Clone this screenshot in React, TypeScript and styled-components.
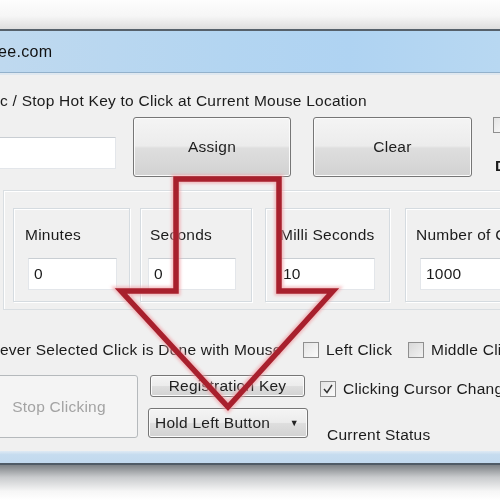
import styled, { createGlobalStyle } from "styled-components";

const GlobalStyle = createGlobalStyle`
  html, body {
    margin: 0;
    padding: 0;
    background: #fff;
  }
  body {
    font-family: "Liberation Sans", Arial, sans-serif;
  }
`;

const Page = styled.div`
  position: relative;
  width: 500px;
  height: 500px;
  overflow: hidden;
  background: #fff;
  display: flex;
  flex-direction: column;
  filter: blur(0.45px);
`;

const TopGap = styled.div`
  height: 29px;
  flex-shrink: 0;
  background: linear-gradient(#fdfdfd, #f6f6f6 55%, #dedede);
`;

const Window = styled.div`
  display: flex;
  flex-direction: column;
  border-top: 2px solid #56616b;
`;

const TitleBar = styled.div`
  height: 41px;
  display: flex;
  align-items: center;
  background: linear-gradient(90deg, #bfd9ef, #b3d5f1 45%, #afd3f2 70%, #b8d8f2);
  border-bottom: 1px solid #93b1cb;
  font-size: 16px;
  color: #111;
`;

const TitleText = styled.span`
  margin-left: -2px;
  margin-top: 1px;
  letter-spacing: 0.3px;
`;

const Body = styled.div`
  height: 378px;
  background: #f0f0f0;
  border-top: 2px solid #dfe8f0;
  padding-top: 17px;
  box-sizing: border-box;
  font-size: 15.5px;
  letter-spacing: 0.25px;
  color: #1b1b1b;
  display: flex;
  flex-direction: column;
`;

const Label = styled.div`
  height: 18px;
  line-height: 18px;
  white-space: nowrap;
`;

const Row = styled.div<{ $top: number; $height: number }>`
  display: flex;
  flex-shrink: 0;
  margin-top: ${(p) => p.$top}px;
  height: ${(p) => p.$height}px;
  white-space: nowrap;
`;

const TextBox = styled.div<{ $width: number; $left?: number; $top?: number }>`
  flex-shrink: 0;
  width: ${(p) => p.$width}px;
  height: 32px;
  margin-left: ${(p) => p.$left ?? 0}px;
  margin-top: ${(p) => p.$top ?? 0}px;
  box-sizing: border-box;
  background: #fff;
  border: 1px solid #e3e6ea;
  border-top-color: #c9ced3;
  display: flex;
  align-items: center;
  padding-left: 5px;
`;

const Button = styled.div<{ $width: number; $height: number; $left: number; $top?: number }>`
  flex-shrink: 0;
  width: ${(p) => p.$width}px;
  height: ${(p) => p.$height}px;
  margin-left: ${(p) => p.$left}px;
  margin-top: ${(p) => p.$top ?? 0}px;
  box-sizing: border-box;
  border: 1px solid #767676;
  border-radius: 3px;
  background: linear-gradient(#f4f4f4, #ececec 48%, #dedede 52%, #d2d2d2);
  box-shadow: inset 0 0 0 1px #fbfbfb;
  display: flex;
  align-items: center;
  justify-content: center;
  color: #1e1e1e;
`;

const DisabledButton = styled(Button)`
  border-color: #b5b9bc;
  background: #f4f4f4;
  color: #a3a3a3;
  box-shadow: none;
`;

const Combo = styled(Button)`
  justify-content: space-between;
  padding: 0 8px 0 6px;
`;

const Caret = styled.span`
  font-size: 9px;
  color: #222;
`;

const RightBits = styled.div`
  margin-left: 21px;
  display: flex;
  flex-direction: column;
  gap: 24px;
`;

const BoldChar = styled.span`
  font-weight: bold;
  margin-left: 2px;
`;

const IntervalGroup = styled.div`
  margin-top: 13px;
  margin-left: 3px;
  height: 120px;
  box-sizing: border-box;
  border: 1px solid #d9dee2;
  border-right: none;
  box-shadow: inset 1px 1px 0 #fff;
  padding-top: 17px;
  padding-left: 9px;
  display: flex;
  flex-shrink: 0;
`;

const FieldGroup = styled.div<{ $width: number; $left: number; $pad: number }>`
  flex-shrink: 0;
  width: ${(p) => p.$width}px;
  height: 94px;
  margin-left: ${(p) => p.$left}px;
  box-sizing: border-box;
  border: 1px solid #d5dbe0;
  box-shadow: inset 1px 1px 0 #fff, 1px 1px 0 #fff;
  padding: 17px 0 0 ${(p) => p.$pad}px;
  display: flex;
  flex-direction: column;
`;

const FieldLabel = styled(Label)<{ $shift: number }>`
  margin-left: ${(p) => p.$shift}px;
  margin-bottom: 14px;
`;

const CheckItem = styled.div<{ $width?: number }>`
  display: flex;
  align-items: center;
  gap: 7px;
  flex-shrink: 0;
  width: ${(p) => (p.$width ? `${p.$width}px` : "auto")};
`;

const Box = styled.span<{ $muted?: boolean }>`
  width: 16px;
  height: 16px;
  box-sizing: border-box;
  border: 1px solid #8f8f8f;
  background: ${(p) => (p.$muted ? "linear-gradient(135deg,#d8d8d8,#f2f2f2)" : "linear-gradient(135deg,#e4e4e4,#fbfbfb)")};
  display: inline-flex;
  align-items: center;
  justify-content: center;
  flex-shrink: 0;
`;

const Column = styled.div<{ $left: number }>`
  display: flex;
  flex-direction: column;
  margin-left: ${(p) => p.$left}px;
  flex-shrink: 0;
`;

const StatusText = styled(Label)`
  margin-top: 28px;
  margin-left: 7px;
`;

const BottomFrame = styled.div`
  height: 12px;
  background: linear-gradient(#dfeaf4, #c6dcef 30%, #c2d9ee);
  border-bottom: 2px solid #505b66;
`;

const BottomShadow = styled.div`
  flex: 1;
  background: linear-gradient(#7d8185, #c9cbcd 35%, #f6f6f6 75%, #fff);
`;

const ArrowLayer = styled.svg`
  position: absolute;
  left: 0;
  top: 0;
  pointer-events: none;
`;

function CheckMark() {
  return (
    <svg width="12" height="12" viewBox="0 0 12 12">
      <path d="M2 6 L5 9.5 L10 2" fill="none" stroke="#333" strokeWidth="1.4" />
    </svg>
  );
}

const arrowPoints = "176,179 279,179 279,291 333,291 228,407 121,291 176,291";

export default function App() {
  return (
    <>
      <GlobalStyle />
      <Page>
        <TopGap />
        <Window>
          <TitleBar>
            <TitleText>ee.com</TitleText>
          </TitleBar>
          <Body>
            <Label>c / Stop Hot Key to Click at Current Mouse Location</Label>
            <Row $top={7} $height={60}>
              <TextBox $width={136} $left={-20} $top={20} />
              <Button $width={158} $height={60} $left={17}>Assign</Button>
              <Button $width={159} $height={60} $left={22}>Clear</Button>
              <RightBits>
                <Box />
                <BoldChar>D</BoldChar>
              </RightBits>
            </Row>
            <IntervalGroup>
              <FieldGroup $width={117} $left={0} $pad={14}>
                <FieldLabel $shift={-3}>Minutes</FieldLabel>
                <TextBox $width={89}>0</TextBox>
              </FieldGroup>
              <FieldGroup $width={112} $left={10} $pad={7}>
                <FieldLabel $shift={2}>Seconds</FieldLabel>
                <TextBox $width={88}>0</TextBox>
              </FieldGroup>
              <FieldGroup $width={125} $left={13} $pad={11}>
                <FieldLabel $shift={3}>Milli Seconds</FieldLabel>
                <TextBox $width={98}>10</TextBox>
              </FieldGroup>
              <FieldGroup $width={130} $left={15} $pad={14}>
                <FieldLabel $shift={-4}>Number of Clicks</FieldLabel>
                <TextBox $width={110}>1000</TextBox>
              </FieldGroup>
            </IntervalGroup>
            <Row $top={31} $height={18}>
              <CheckItem $width={303}>ever Selected Click is Done with Mouse</CheckItem>
              <CheckItem $width={105}>
                <Box />
                Left Click
              </CheckItem>
              <CheckItem>
                <Box $muted />
                Middle Click
              </CheckItem>
            </Row>
            <Row $top={16} $height={63}>
              <DisabledButton $width={158} $height={63} $left={-20}>Stop Clicking</DisabledButton>
              <Column $left={10}>
                <Button $width={155} $height={22} $left={2}>Registration Key</Button>
                <Combo $width={160} $height={30} $left={0} $top={11}>
                  Hold Left Button
                  <Caret>▼</Caret>
                </Combo>
              </Column>
              <Column $left={12}>
                <CheckItem style={{ marginTop: 5 }}>
                  <Box>
                    <CheckMark />
                  </Box>
                  Clicking Cursor Change
                </CheckItem>
                <StatusText>Current Status</StatusText>
              </Column>
            </Row>
          </Body>
          <BottomFrame />
        </Window>
        <BottomShadow />
        <ArrowLayer width="500" height="500" viewBox="0 0 500 500">
          <defs>
            <filter id="glow" x="-20%" y="-20%" width="140%" height="140%">
              <feGaussianBlur stdDeviation="1.6" />
            </filter>
          </defs>
          <polygon
            points={arrowPoints}
            fill="none"
            stroke="#f0a0a6"
            strokeWidth="9"
            filter="url(#glow)"
            opacity="0.7"
          />
          <polygon points={arrowPoints} fill="none" stroke="#a8202d" strokeWidth="5.5" />
        </ArrowLayer>
      </Page>
    </>
  );
}
